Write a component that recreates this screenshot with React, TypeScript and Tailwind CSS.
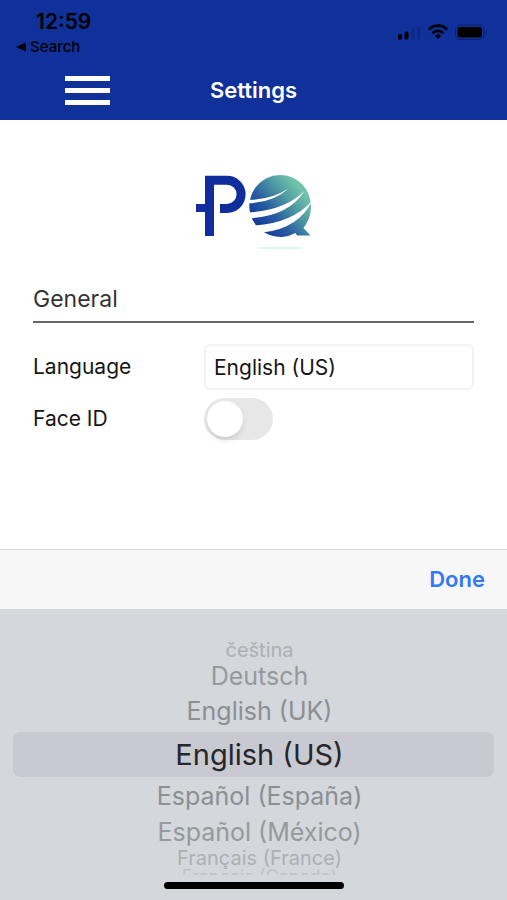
import { useState } from "react";

const languages = [
  { name: "čeština", style: "h-[22px] text-xl text-[#adb0b4]" },
  { name: "Deutsch", style: "h-[31px] text-[25px] text-[#96999d]" },
  { name: "English (UK)", style: "h-10 text-[25px] text-[#8c8f93]" },
  { name: "English (US)", style: "h-[45px] text-[29px] text-[#26272b]" },
  { name: "Español (España)", style: "h-10 text-[25px] text-[#8c8f93]" },
  { name: "Español (México)", style: "h-[31px] text-[25px] text-[#96999d]" },
  { name: "Français (France)", style: "h-5 text-xl text-[#adb0b4]" },
];

function StatusIcons() {
  return (
    <svg width="92" height="18" viewBox="0 0 92 18" aria-hidden="true">
      <rect x="1" y="11" width="4" height="5.5" rx="1.5" />
      <rect x="7.5" y="8.5" width="4" height="8" rx="1.5" />
      <rect x="14" y="5.5" width="3.5" height="11" rx="1.5" opacity="0.14" />
      <rect x="20" y="3.5" width="3.5" height="13" rx="1.5" opacity="0.14" />
      <g fill="none" stroke="#000" strokeWidth="2.7">
        <path d="M31.9 6.6a12.6 12.6 0 0 1 18.2 0" />
        <path d="M35.5 10.2a7.8 7.8 0 0 1 11 0" />
      </g>
      <path d="M37.9 12.6a4.4 4.4 0 0 1 6.2 0L41 16.2z" />
      <rect x="58.5" y="2" width="28.5" height="14.5" rx="4.5" fill="none" stroke="#000" strokeOpacity="0.3" />
      <rect x="60.5" y="4" width="24.5" height="10.5" rx="2.5" />
      <path d="M88.5 7q2.5 2.3 0 4.6z" opacity="0.35" />
    </svg>
  );
}

function Logo() {
  return (
    <svg width="120" height="80" viewBox="14 12 120 80" role="img" aria-label="PQ">
      <defs>
        <linearGradient id="globe" x1="0.15" y1="0.85" x2="0.85" y2="0.25">
          <stop offset="0" stopColor="#15389c" />
          <stop offset="0.35" stopColor="#285ca0" />
          <stop offset="0.7" stopColor="#4f99a4" />
          <stop offset="1" stopColor="#70c3a8" />
        </linearGradient>
      </defs>
      <g fill="none" stroke="#102d9c" strokeWidth="9">
        <path d="M29.5 76V20.2H47a14 14 0 0 1 0 28.2H40" />
        <path d="M16 48H29" strokeWidth="8" />
      </g>
      <path
        d="M100 15a31 31 0 0 1 31 31c0 9-3 16-7.5 22L130.5 75.5H117L115.5 73A31 31 0 1 1 100 15z"
        fill="url(#globe)"
      />
      <g fill="#fff">
        <path d="M67 40Q91 40 108.5 28.5Q93 43 67 43.2z" />
        <path d="M67 52.5Q104 51 124.5 31Q108 57 67 58.3z" />
        <path d="M67 65.5H75Q112 63 132 41Q119 68 84 72.3L72 76z" />
      </g>
      <ellipse cx="101" cy="88" rx="24" ry="1.5" fill="#e1f5f1" />
    </svg>
  );
}

export default function App() {
  const [language, setLanguage] = useState("English (US)");
  const [faceId, setFaceId] = useState(false);

  return (
    <div className="min-h-screen flex flex-col bg-white font-['Inter','Liberation_Sans',sans-serif]">
      <header className="bg-[#10309a] h-[120px] flex flex-col">
        <div className="flex justify-between pt-3 pl-4 pr-[18px] h-[60px] text-black">
          <div>
            <div className="pl-5 text-[21px] leading-5 font-semibold">12:59</div>
            <a href="#" className="flex items-center gap-1 mt-1 text-[15px] leading-[22px] font-medium">
              <svg width="10" height="10" viewBox="0 0 10 10" aria-hidden="true">
                <path d="M0 5L10 0.5V9.5z" />
              </svg>
              Search
            </a>
          </div>
          <div className="pt-[11px]">
            <StatusIcons />
          </div>
        </div>
        <div className="grid grid-cols-[1fr_auto_1fr] items-center h-[60px]">
          <button aria-label="Menu" className="ml-[65px] w-[45px] flex flex-col gap-[7px]">
            <span className="h-[5px] w-full bg-white" />
            <span className="h-[5px] w-full bg-white" />
            <span className="h-[5px] w-full bg-white" />
          </button>
          <h1 className="text-[22px] font-semibold text-white">Settings</h1>
        </div>
      </header>

      <main className="flex-1 px-[33px] pt-[52px] text-[21px] text-[#161616]">
        <div className="flex justify-center">
          <Logo />
        </div>
        <h2 className="mt-[31px] pb-[6px] border-b-2 border-[#666] text-[23px] leading-8 text-[#333]">General</h2>
        <div className="flex items-center mt-[21px]">
          <label htmlFor="language" className="w-[171px]">Language</label>
          <input
            id="language"
            readOnly
            value={language}
            className="flex-1 min-w-0 h-[46px] px-2 rounded-md border-2 border-[#f2f2f2] outline-none"
          />
        </div>
        <div className="flex items-center mt-2">
          <label htmlFor="faceId" className="w-[171px]">Face ID</label>
          <input
            id="faceId"
            type="checkbox"
            role="switch"
            checked={faceId}
            onChange={(e) => setFaceId(e.target.checked)}
            className="appearance-none w-[69px] h-[42px] p-[3px] rounded-full bg-[#e7e7e7] checked:bg-green-500 before:block before:size-9 before:rounded-full before:bg-white before:shadow-md checked:before:ml-[27px]"
          />
        </div>
      </main>

      <section aria-label="Language picker">
        <div className="flex items-center justify-end h-[60px] px-[22px] bg-[#f7f7f7] border-t border-[#d5d6d8]">
          <button className="text-[22px] font-semibold text-[#3478f6]">Done</button>
        </div>
        <div className="bg-[#d4d7dc] px-[13px] pt-[30px] pb-[11px]">
          <ul>
            {languages.map((l) => (
              <li key={l.name} className={l.name === "English (US)" ? "rounded-lg bg-[#c9c9d1]" : ""}>
                <button
                  onClick={() => setLanguage(l.name)}
                  className={`w-full pl-3 flex items-center justify-center ${l.style}`}
                >
                  {l.name}
                </button>
              </li>
            ))}
            <li className="h-[7px] pl-3 overflow-hidden text-center text-lg leading-[18px] text-[#c0c3c8]">Français (Canada)</li>
          </ul>
          <div className="mx-auto mt-[7px] w-[180px] h-[7px] rounded-full bg-black" />
        </div>
      </section>
    </div>
  );
}
